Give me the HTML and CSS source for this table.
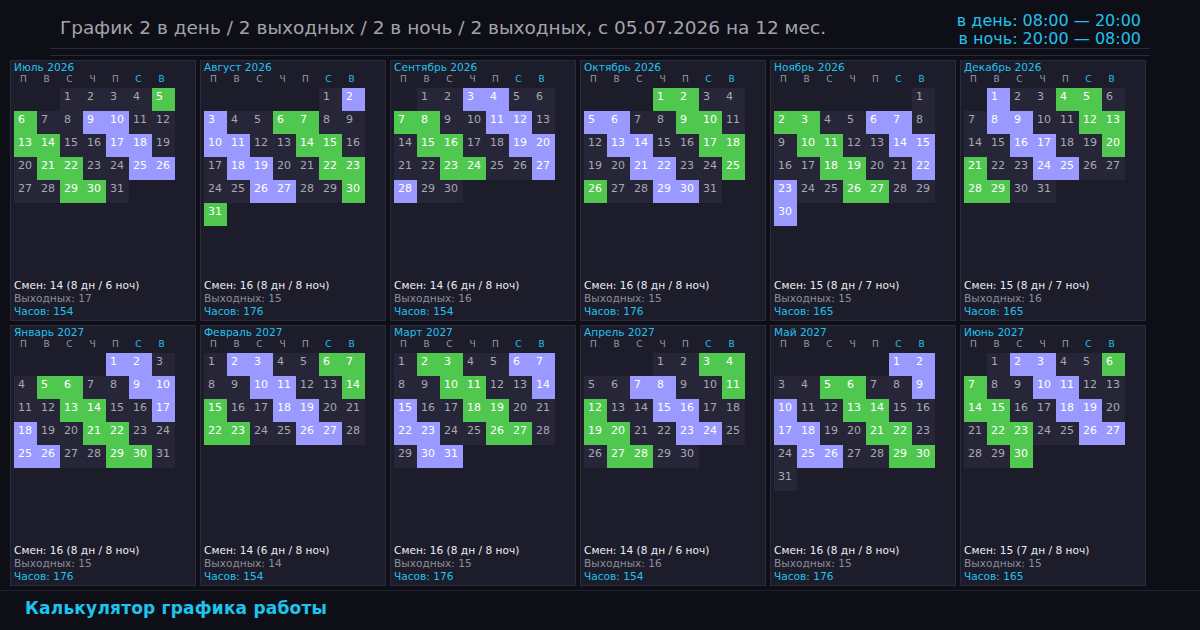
FILE: index.html
```html
<!DOCTYPE html>
<html lang="ru">
<head>
<meta charset="utf-8">
<title>Калькулятор графика работы</title>
<link rel="stylesheet" href="styles.css">
</head>
<body>
<header class="top">
  <h1 class="title">График 2 в день / 2 выходных / 2 в ночь / 2 выходных, с 05.07.2026 на 12 мес.</h1>
  <div class="hours">
    <div>в день: 08:00 — 20:00</div>
    <div>в ночь: 20:00 — 08:00</div>
  </div>
</header>
<div class="divider"></div>
<main class="months" id="months"></main>
<footer class="foot">Калькулятор графика работы</footer>
<script src="script.js"></script>
</body>
</html>
```

FILE: styles.css
```css
html, body {
  margin: 0;
  padding: 0;
}
body {
  width: 1200px;
  height: 630px;
  overflow: hidden;
  background: #0e0e16;
  font-family: "DejaVu Sans", "Noto Sans", sans-serif;
  color: #e8e8ec;
}
.top {
  margin: 0 50px;
  padding: 12px 9px 0 10px;
  height: 36px;
  border-bottom: 1px solid #2a2a3c;
  display: flex;
  justify-content: space-between;
  align-items: flex-start;
}
.title {
  margin: 0;
  padding-top: 4px;
  font-size: 18.5px;
  line-height: 24px;
  font-weight: normal;
  color: #a3a3ab;
  white-space: nowrap;
}
.hours {
  font-size: 16px;
  line-height: 18px;
  color: #22c2ee;
  text-align: right;
  white-space: nowrap;
}
.divider {
  margin: 6px 50px 0;
  border-top: 1px solid #2a2a3c;
}
.months {
  margin-top: 4px;
  padding: 0 10px;
  display: grid;
  grid-template-columns: repeat(6, 186px);
  grid-auto-rows: 261px;
  gap: 4px;
}
.card {
  box-sizing: border-box;
  border: 1px solid #2b2b3b;
  background: #1c1c2a;
  padding: 1px 3px 2px;
  display: flex;
  flex-direction: column;
}
.card-title {
  font-size: 10.6px;
  line-height: 11px;
  color: #22c2ee;
  white-space: nowrap;
}
.weekdays {
  margin-top: 1px;
  display: grid;
  grid-template-columns: repeat(7, 23px);
  font-size: 9px;
  line-height: 10px;
  color: #9a9aa6;
}
.wd {
  text-align: center;
  padding-right: 4px;
}
.wd.we {
  color: #22c2ee;
}
.days {
  margin-top: 4px;
  display: grid;
  grid-template-columns: repeat(7, 23px);
  grid-auto-rows: 23px;
}
.cell {
  box-sizing: border-box;
  padding: 2px 0 0 4px;
  font-size: 11px;
  line-height: 13px;
  color: #a9a9b2;
  background: #262638;
}
.cell.blank {
  background: transparent;
}
.cell.day {
  background: #50c850;
  color: #ffffff;
}
.cell.night {
  background: #9999ff;
  color: #ffffff;
}
.stats {
  margin-top: auto;
  font-size: 10.6px;
  line-height: 13px;
  white-space: nowrap;
}
.s-shifts {
  color: #ececf0;
}
.s-off {
  color: #8e8e9a;
}
.s-hours {
  color: #22c2ee;
}
.foot {
  margin-top: 4px;
  border-top: 1px solid #22222f;
  padding: 7px 25px 0;
  font-size: 17px;
  line-height: 20px;
  font-weight: bold;
  color: #1ec4ee;
  letter-spacing: 0.2px;
}
```

FILE: script.js
```js
(function () {
  var names = ['Январь', 'Февраль', 'Март', 'Апрель', 'Май', 'Июнь',
    'Июль', 'Август', 'Сентябрь', 'Октябрь', 'Ноябрь', 'Декабрь'];
  var wds = ['П', 'В', 'С', 'Ч', 'П', 'С', 'В'];
  var DAY = 86400000;
  var start = Date.UTC(2026, 6, 5);
  var end = Date.UTC(2027, 6, 5);
  var hoursPerShift = 11;

  function kind(t) {
    if (t < start || t >= end) return null;
    var diff = Math.round((t - start) / DAY);
    var m = diff % 8;
    if (m < 2) return 'day';
    if (m >= 4 && m < 6) return 'night';
    return null;
  }

  function el(tag, cls, text) {
    var e = document.createElement(tag);
    if (cls) e.className = cls;
    if (text !== undefined) e.textContent = text;
    return e;
  }

  var root = document.getElementById('months');
  for (var i = 0; i < 12; i++) {
    var y = 2026 + Math.floor((6 + i) / 12);
    var mo = (6 + i) % 12;
    var card = el('section', 'card');
    card.appendChild(el('div', 'card-title', names[mo] + ' ' + y));

    var w = el('div', 'weekdays');
    for (var k = 0; k < 7; k++) {
      w.appendChild(el('div', k >= 5 ? 'wd we' : 'wd', wds[k]));
    }
    card.appendChild(w);

    var grid = el('div', 'days');
    var first = new Date(Date.UTC(y, mo, 1));
    var lead = (first.getUTCDay() + 6) % 7;
    for (var b = 0; b < lead; b++) grid.appendChild(el('div', 'cell blank'));
    var dim = new Date(Date.UTC(y, mo + 1, 0)).getUTCDate();
    var dn = 0, nn = 0;
    for (var d = 1; d <= dim; d++) {
      var t = Date.UTC(y, mo, d);
      var kd = kind(t);
      if (kd === 'day') dn++;
      if (kd === 'night') nn++;
      grid.appendChild(el('div', kd ? 'cell ' + kd : 'cell', String(d)));
    }
    card.appendChild(grid);

    var total = dn + nn;
    var st = el('div', 'stats');
    st.appendChild(el('div', 's-shifts', 'Смен: ' + total + ' (' + dn + ' дн / ' + nn + ' ноч)'));
    st.appendChild(el('div', 's-off', 'Выходных: ' + (dim - total)));
    st.appendChild(el('div', 's-hours', 'Часов: ' + total * hoursPerShift));
    card.appendChild(st);

    root.appendChild(card);
  }
})();
```
